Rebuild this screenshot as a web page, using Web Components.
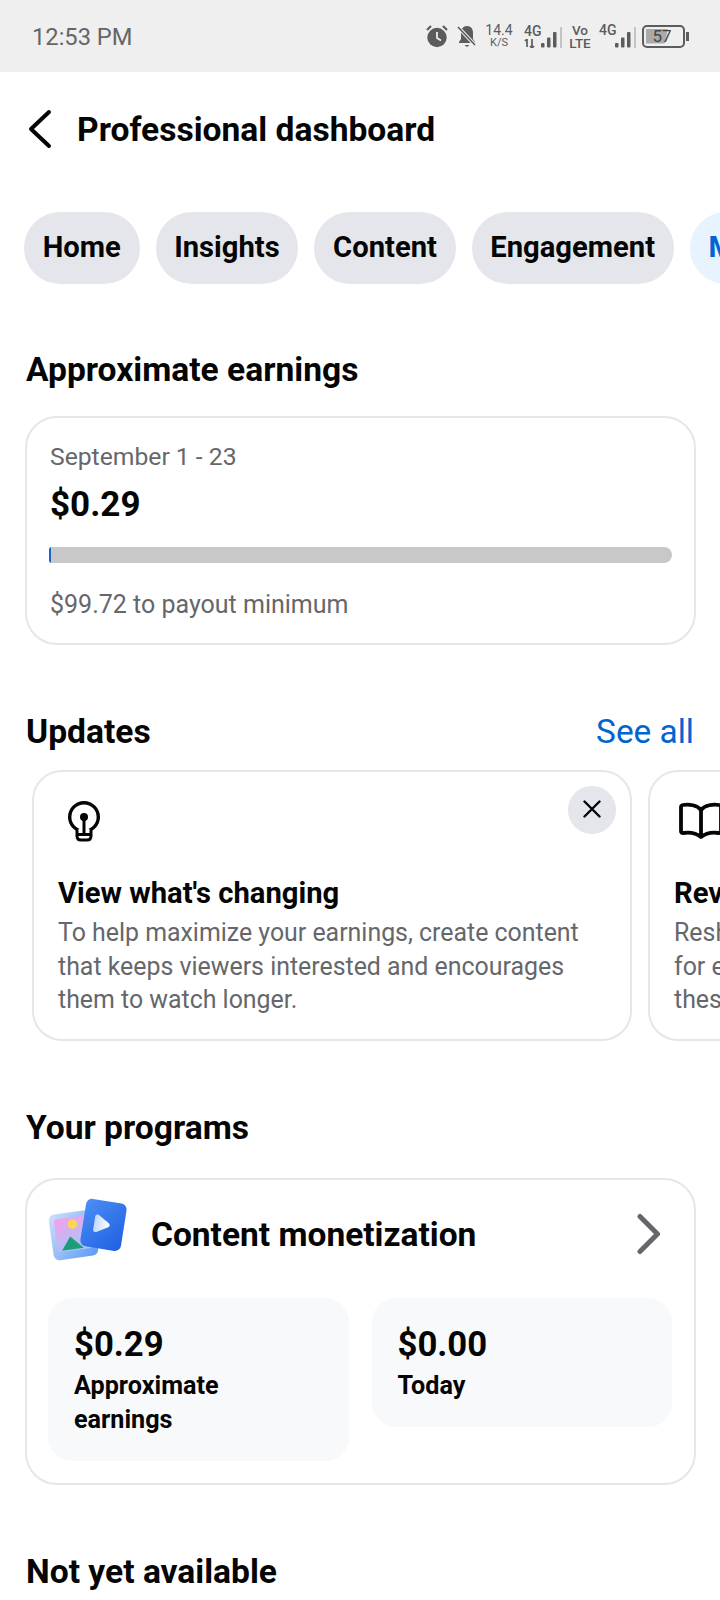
<!DOCTYPE html>
<html lang="en"><head><meta charset="utf-8"><title>Professional dashboard</title>
<style>
html,body{margin:0;background:#fff}
body{width:720px;height:1600px;overflow:hidden;font-family:Roboto,"Liberation Sans",sans-serif;color:#050505}
</style></head><body>
<dash-app></dash-app>
<script>
function def(name, html){
  customElements.define(name, class extends HTMLElement{
    constructor(){super();this.attachShadow({mode:'open'}).innerHTML=html;}
  });
}
const bars=`<svg width="16" height="23" viewBox="0 0 16 23"><rect x="0" y="18" width="3.500" height="4.500" rx="1" fill="#5c5c5c"/><rect x="6" y="12.500" width="3.500" height="10" rx="1" fill="#5c5c5c"/><rect x="12" y="7" width="3.500" height="15.500" rx="1" fill="#5c5c5c"/></svg>`;
def('status-bar',`<style>
:host{display:flex;box-sizing:border-box;height:72px;background:#efefef;align-items:center;justify-content:space-between;padding:0 31px 0 32px;color:#5c5c5c}
.t{font-size:23.700px;color:#666;margin-top:1px}
.r{display:flex;align-items:center;height:30px}
svg{display:block;flex:none}
.sp{font-size:11px;line-height:11px;text-align:center;font-weight:400;width:30px;margin-left:7px;margin-top:-2px}
.sp b{display:block;font-weight:400;font-size:14px;line-height:14px}
.g{font-size:14px;font-weight:500;line-height:14px}
.net{display:flex;flex-direction:column;width:16px;margin-top:-1px}
.vo{font-size:13.500px;line-height:13px;font-weight:500;width:24px;text-align:center;margin-top:2px}
.bat{box-sizing:border-box;width:43px;height:23px;border:2px solid #5c5c5c;border-radius:5px;margin-left:6px;position:relative;font-size:17px;line-height:19px;text-align:center;color:#444;padding-right:3px}
.bat i{position:absolute;left:2px;top:2px;bottom:2px;width:22px;background:#aaa;clip-path:polygon(0 0,100% 0,85% 100%,0 100%)}
.bat span{position:relative}
.nub{width:3px;height:9px;background:#5c5c5c;margin-left:1px}
.sep{width:2px;height:21px;background:#c4c4c4;display:block;margin-left:3px;margin-top:2px}
</style>
<span class="t">12:53 PM</span>
<div class="r">
<svg width="22" height="24" viewBox="0 0 22 24"><circle cx="11" cy="13.500" r="9.700" fill="#5c5c5c"/><path d="M11 8v6l4 2.500" fill="none" stroke="#efefef" stroke-width="1.800"/><path d="M1 6l4-4M21 6l-4-4" stroke="#5c5c5c" stroke-width="2.200"/></svg>
<svg style="margin-left:9px" width="20" height="24" viewBox="0 0 20 24"><path d="M10 2c-4 0-6 3-6 7v6l-2 3v1h16v-1l-2-3V9c0-4-2-7-6-7z" fill="#5c5c5c"/><path d="M7.500 21h5l-2.500 2z" fill="#5c5c5c"/><path d="M1 3l17 18" stroke="#efefef" stroke-width="3.500"/><path d="M1 3l17 18" stroke="#5c5c5c" stroke-width="1.600"/></svg>
<div class="sp"><b>14.4</b>K/S</div>
<div class="net" style="margin-left:10px"><span class="g">4G</span><svg width="12" height="9" viewBox="0 0 12 9" style="margin-top:1px"><path d="M3 0v8M1 2l2-2M8 0v9M8 9l2-2M6 7l2 2" stroke="#5c5c5c" stroke-width="1.700" fill="none"/></svg></div>
<span style="margin-left:1px">${bars}</span><i class="sep"></i>
<div class="vo" style="margin-left:6px">Vo<br>LTE</div>
<div class="net" style="margin-left:7px;align-self:flex-start;margin-top:2px"><span class="g">4G</span></div>
${bars}<i class="sep"></i>
<div class="bat"><i></i><span>57</span></div><div class="nub"></div>
</div>`);

def('dash-header',`<style>
:host{display:flex;align-items:center;height:114px;padding-left:27px;box-sizing:border-box}
svg{display:block;flex:none}
h1{margin:2px 0 0 25px;font-size:33.600px;font-weight:700;line-height:40px;color:#050505}
</style>
<svg width="25" height="40" viewBox="0 0 25 40"><path d="M22 3L4 20l18 17" fill="none" stroke="#050505" stroke-width="4" stroke-linecap="round" stroke-linejoin="round"/></svg>
<h1><slot></slot></h1>`);

def('chip-row',`<style>
:host{display:flex;gap:16px;padding:26px 0 0 24px;overflow:hidden;white-space:nowrap}
</style><slot></slot>`);
def('nav-chip',`<style>
:host{display:block;flex:none;box-sizing:border-box;height:72px;line-height:70px;padding:0 18.700px;border-radius:36px;background:#e4e6eb;color:#050505;font-size:29.200px;font-weight:700}
:host([active]){background:#e7f3ff;color:#0064d1}
</style><slot></slot>`);

def('section-title',`<style>
:host{display:flex;justify-content:space-between;align-items:center;padding:0 26px 0 26px;font-size:33.600px;font-weight:700;line-height:40px;color:#050505}
::slotted([slot=a]){font-size:33.400px;font-weight:400;color:#0064d1}
</style><span><slot></slot></span><slot name="a"></slot>`);

def('round-card',`<style>
:host{display:block;box-sizing:border-box;margin:0 24px 0 25px;border:2px solid #e4e6eb;border-radius:32px;background:#fff}
</style><slot></slot>`);

def('earn-body',`<style>
:host{display:block;box-sizing:border-box;height:225px;padding:21px 22px 0 23px}
.d{font-size:24.700px;line-height:36px;color:#65676b}
.v{font-size:35px;font-weight:700;line-height:40px;margin-top:10px;color:#050505}
.b{height:16px;background:#c8c8c8;margin:22px 0 0 -1px;position:relative;overflow:hidden;border-radius:3px 8px 8px 3px}
.b i{position:absolute;left:0;top:0;bottom:0;width:2px;background:#1763cf}
.m{font-size:25px;line-height:36px;color:#65676b;margin-top:24px}
</style>
<div class="d">September 1 - 23</div><div class="v">$0.29</div><div class="b"><i></i></div><div class="m">$99.72 to payout minimum</div>`);

def('update-row',`<style>
:host{display:flex;gap:16px;padding-left:32px;overflow:hidden}
</style><slot></slot>`);
def('update-card',`<style>
:host{display:block;flex:none;position:relative;box-sizing:border-box;width:600px;height:271px;border:2px solid #e4e6eb;border-radius:30px;padding:26px 24px 0 24px;background:#fff}
.i{height:44px}
h3{margin:32px 0 0;font-size:29.200px;font-weight:700;line-height:38px;color:#050505;white-space:nowrap}
p{margin:4px 0 0;font-size:24.900px;line-height:33.600px;color:#65676b;white-space:nowrap}
.x{position:absolute;top:14px;right:14px;width:48px;height:48px;border-radius:50%;background:#e4e6eb;display:flex;align-items:center;justify-content:center}
:host(:not([closable])) .x{display:none}
svg{display:block}
</style>
<div class="i"><slot name="icon"></slot></div>
<h3><slot name="title"></slot></h3>
<p><slot></slot></p>
<div class="x"><svg width="18" height="18" viewBox="0 0 18 18" style="margin-top:-2px"><path d="M1.500 1.500l15 15M16.500 1.500l-15 15" stroke="#050505" stroke-width="2.400" stroke-linecap="round"/></svg></div>`);

def('program-head',`<style>
:host{display:flex;align-items:center;height:110px;padding:0 33px 0 21px;box-sizing:border-box}
.t{margin-left:23px;flex:1;font-size:33.500px;font-weight:700;color:#050505;margin-top:-1px}
svg{display:block;flex:none}
</style>
<svg style="margin-top:-13px" width="80" height="64" viewBox="0 0 80 64"><defs>
<linearGradient id="a" x1="0" y1="0" x2="1" y2="1"><stop offset="0" stop-color="#cfe0fb"/><stop offset="1" stop-color="#5b9af5"/></linearGradient>
<linearGradient id="b" x1="0" y1="0" x2=".4" y2="1"><stop offset="0" stop-color="#f7a0ea"/><stop offset="1" stop-color="#a9c4fa"/></linearGradient>
<linearGradient id="c" x1="0" y1="0" x2="1" y2="1"><stop offset="0" stop-color="#4b8ff5"/><stop offset="1" stop-color="#1f5fe0"/></linearGradient>
<linearGradient id="d" x1="0" y1="0" x2="1" y2="0"><stop offset="0" stop-color="#c2d8fb"/><stop offset="1" stop-color="#fff"/></linearGradient>
</defs>
<g transform="rotate(-8 26 38)"><rect x="3" y="15" width="45" height="46" rx="6" fill="url(#a)"/><rect x="8" y="20" width="35" height="33" rx="3" fill="url(#b)"/><circle cx="26" cy="27" r="4.800" fill="#f9d65a"/><path d="M12 52l10-13 12 13z" fill="#1e9c78"/></g>
<g transform="rotate(9 56 28)"><rect x="35" y="4" width="41" height="48" rx="6" fill="url(#c)"/><path d="M46 21c0-2 1.500-3 3.500-2l11 6.500c1.500 1 1.500 3 0 4l-11 6.500c-2 1-3.500 0-3.500-2z" fill="url(#d)"/></g>
</svg>
<span class="t"><slot></slot></span>
<svg style="margin-top:-2px" width="24" height="42" viewBox="0 0 24 42"><path d="M3 3.500l17.500 17.500L3 38.500" fill="none" stroke="#65676b" stroke-width="5" stroke-linecap="round" stroke-linejoin="round"/></svg>`);

def('stat-grid',`<style>
:host{display:grid;grid-template-columns:300.500px 300.500px;gap:23px;align-items:start;padding:8px 21px 0 21px;height:193px;box-sizing:border-box}
</style><slot></slot>`);
def('stat-tile',`<style>
:host{display:block;box-sizing:border-box;background:#f8f9fb;border-radius:24px;padding:26px 26px 0;min-height:129px}
:host([tall]){height:163px}
.v{font-size:34.700px;font-weight:700;line-height:40px;color:#050505}
.l{font-size:25.200px;font-weight:700;line-height:34px;margin-top:5px;color:#050505}
</style>
<div class="v"><slot name="v"></slot></div><div class="l"><slot></slot></div>`);

def('dash-app',`<style>
:host{display:block;width:720px;height:1600px;overflow:hidden;font-family:Roboto,"Liberation Sans",sans-serif;background:#fff}
.s1{margin-top:66px}.c1{margin-top:26px}
.s2{margin-top:67px}.c2{margin-top:18px}
.s3{margin-top:67px}.c3{margin-top:30px}
.s4{margin-top:67px}
svg{display:block}
</style>
<status-bar></status-bar>
<dash-header>Professional dashboard</dash-header>
<chip-row><nav-chip>Home</nav-chip><nav-chip>Insights</nav-chip><nav-chip>Content</nav-chip><nav-chip>Engagement</nav-chip><nav-chip active>Monetization</nav-chip></chip-row>
<section-title class="s1">Approximate earnings</section-title>
<round-card class="c1"><earn-body></earn-body></round-card>
<section-title class="s2">Updates<span slot="a">See all</span></section-title>
<update-row class="c2">
<update-card closable>
<svg slot="icon" style="margin-left:8px" width="36" height="44" viewBox="0 0 36 44"><circle cx="18" cy="19" r="14.300" fill="none" stroke="#050505" stroke-width="3.400"/><path d="M11 31v7q0 4 4 4h6q4 0 4-4v-7" fill="#fff" stroke="#050505" stroke-width="3"/><circle cx="18" cy="19" r="4" fill="#050505"/><path d="M18 19v17M11 36.500h14" stroke="#050505" stroke-width="3"/></svg>
<span slot="title">View what's changing</span>To help maximize your earnings, create content<br>that keeps viewers interested and encourages<br>them to watch longer.</update-card>
<update-card>
<svg slot="icon" width="44" height="44" viewBox="0 0 44 44" style="margin-left:5px"><path d="M22 12C18 7 10 6 4 7c-1.500.3-2 1-2 2v24c0 1.500 1 2 2.500 2C11 34 17 35 22 39c5-4 11-5 17.500-4 1.500 0 2.500-.5 2.500-2V9c0-1-.5-1.700-2-2-6-1-14 0-18 5zM22 12v27" fill="none" stroke="#050505" stroke-width="3.800" stroke-linejoin="round"/></svg>
<span slot="title">Review your content</span>Reshare your best content<br>for extra reach and earnings<br>these are recommended.</update-card>
</update-row>
<section-title class="s3">Your programs</section-title>
<round-card class="c3"><program-head>Content monetization</program-head>
<stat-grid><stat-tile tall><span slot="v">$0.29</span>Approximate<br>earnings</stat-tile><stat-tile><span slot="v">$0.00</span>Today</stat-tile></stat-grid></round-card>
<section-title class="s4">Not yet available</section-title>`);
</script>
</body></html>
